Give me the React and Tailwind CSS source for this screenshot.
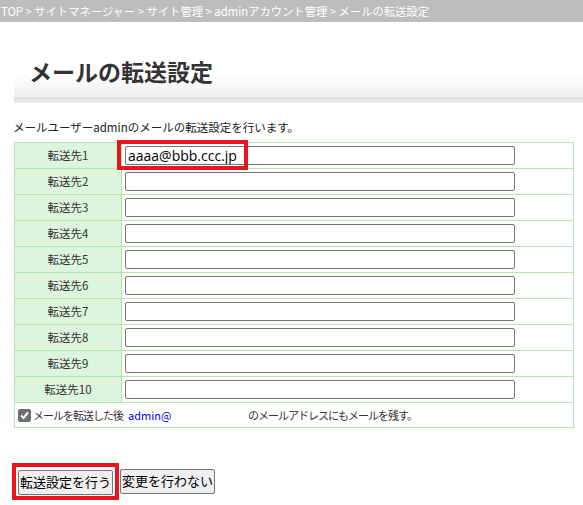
const jp = { fontFamily: '"Noto Sans CJK JP", "Liberation Sans", sans-serif' }

const rows = Array.from({ length: 10 }, (_, i) => i + 1)

export default function App() {
  return (
    <div className="w-[583px] h-[505px] bg-white text-[#333] overflow-hidden" style={jp}>
      <div className="h-[22px] bg-[#bdbdbd] text-white text-[11.3px] leading-[22px] pl-[1px] whitespace-nowrap">
        TOP &gt; サイトマネージャー &gt; サイト管理 &gt; adminアカウント管理 &gt; メールの転送設定
      </div>

      <div className="ml-[14px] mt-[18px]">
        <div className="h-[57px] bg-gradient-to-b from-white from-60% to-[#efefef] pl-[15px] pt-[18px]">
          <h1 className="text-[23px] font-bold leading-[26px] text-[#333]">メールの転送設定</h1>
        </div>
        <div className="h-[6px] bg-gradient-to-b from-[#e2e2e2] to-[#ececec]" />
      </div>

      <p className="text-[11.5px] ml-[13px] mt-[15px] leading-[18px] text-[#222]">
        メールユーザーadminのメールの転送設定を行います。
      </p>

      <table className="ml-[14px] mt-[6px] w-[560px] border-collapse text-[11.5px]">
        <tbody>
          {rows.map((n) => (
            <tr key={n} className="h-[26px]">
              <td className="w-[107px] border border-[#b7e4b7] bg-[#ddf4dd] text-center text-[#333] p-0">
                転送先{n}
              </td>
              <td className="border border-[#b7e4b7] px-[3px] py-0">
                <div className="relative">
                  <input
                    type="text"
                    defaultValue={n === 1 ? 'aaaa@bbb.ccc.jp' : ''}
                    className="block w-[390px] h-[19px] border border-[#767676] rounded-[2px] px-[2px] text-[14px] text-black outline-none"
                    style={{ fontFamily: '"Open Sans", "Liberation Sans", sans-serif' }}
                  />
                  {n === 1 && (
                    <div className="absolute left-[-8px] top-[-6px] w-[131px] h-[30px] border-[4px] border-[#e8151f]" />
                  )}
                </div>
              </td>
            </tr>
          ))}
          <tr className="h-[25px]">
            <td colSpan={2} className="border border-[#b7e4b7] px-[3px] py-0">
              <div className="flex items-center text-[11px] tracking-[-1px] text-[#333]">
                <span className="w-[13px] h-[13px] bg-[#707070] rounded-[2px] flex items-center justify-center mr-[2px]">
                  <svg width="11" height="11" viewBox="0 0 11 11">
                    <path d="M2 5.5 L4.5 8 L9 2.5" fill="none" stroke="white" strokeWidth="2" />
                  </svg>
                </span>
                <span>メールを転送した後</span>
                <span className="text-[#0000ee] ml-[5px] w-[120px] tracking-normal">admin@</span>
                <span>のメールアドレスにもメールを残す。</span>
              </div>
            </td>
          </tr>
        </tbody>
      </table>

      <div className="flex items-center ml-[12px] mt-[35px]">
        <div className="border-[4px] border-[#e8151f] px-[2px] py-[1px]">
          <button className="h-[25px] px-[1px] border border-[#767676] rounded-[2px] bg-[#efefef] text-[13px] leading-[20px] text-black">
            転送設定を行う
          </button>
        </div>
        <button className="h-[25px] px-[1px] ml-[1px] border border-[#767676] rounded-[2px] bg-[#efefef] text-[13px] leading-[20px] text-black">
          変更を行わない
        </button>
      </div>
    </div>
  )
}
